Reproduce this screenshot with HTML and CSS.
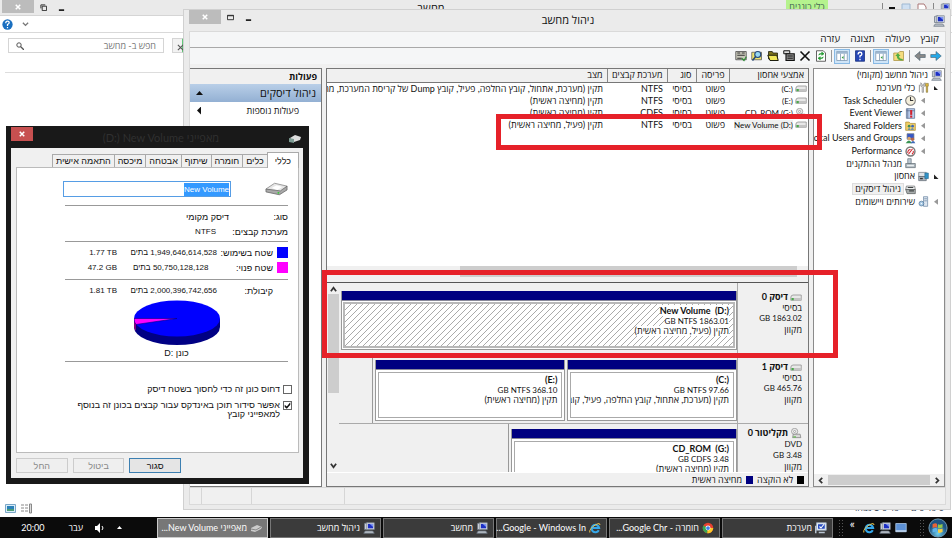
FILE: index.html
```html
<!DOCTYPE html>
<html lang="he" dir="rtl">
<head>
<meta charset="utf-8">
<title>ניהול מחשב</title>
<link rel="stylesheet" href="styles.css">
</head>
<body>
<svg class="defs" aria-hidden="true">
  <symbol id="i-computer" viewBox="0 0 16 16"><path d="M2 2l4-1v9H2z" fill="#c9ced6" stroke="#6b7684"/><path d="M5 1h10v9H5z" fill="#e3e7ec" stroke="#77808c"/><path d="M6.500 2.500h7v6h-7z" fill="#1c2fc4"/><path d="M9 2.500h4.500v4z" fill="#7b93f2"/><path d="M3 12h10l2 3H1z" fill="#bcc3cb" stroke="#6b7684"/></symbol>
  <symbol id="i-drive" viewBox="0 0 16 10"><path d="M4 1h11v7H1V5q0-4 3-4z" fill="#e8e8e8" stroke="#8b8b8b"/><path d="M1 5h14v3H1z" fill="#c4c4c4"/><path d="M2 5h3v3H2z" fill="#49a84a"/></symbol>
  <symbol id="i-cd" viewBox="0 0 16 16"><circle cx="6" cy="5" r="4.500" fill="#eee" stroke="#888"/><circle cx="6" cy="5" r="1.500" fill="#fff" stroke="#888"/><path d="M4 9h10l1 5H3z" fill="#d8d8d8" stroke="#777"/><path d="M4 12h4v2H4z" fill="#6cbb5c"/></symbol>
  <symbol id="i-tools" viewBox="0 0 16 16"><path d="M4 1v5l2 1v8h2V7l2-1V1L8 3v2H6V3z" fill="#d8d8d8" stroke="#777" stroke-width=".8"/><path d="M11 2h4v4h-1v9h-2V6h-1z" fill="#e0b93c" stroke="#77682d" stroke-width=".8"/><path d="M2 4v11" stroke="#999" stroke-width="1.500"/></symbol>
  <symbol id="i-clock" viewBox="0 0 16 16"><circle cx="8" cy="8" r="7" fill="#f5efdc" stroke="#777" stroke-width="1.500"/><path d="M8 3v5h4" fill="none" stroke="#333" stroke-width="1.500"/></symbol>
  <symbol id="i-event" viewBox="0 0 16 16"><path d="M2 1h12v14H2z" fill="#b9cdec" stroke="#526487"/><path d="M4 1v14M2 4h12" stroke="#526487"/><path d="M9 3v7" stroke="#d4212c" stroke-width="3"/><path d="M9 11v3" stroke="#d4212c" stroke-width="3"/></symbol>
  <symbol id="i-shared" viewBox="0 0 16 16"><path d="M1 3h5l2 2h7v10H1z" fill="#f0cf68" stroke="#ac8a2d"/><circle cx="6" cy="9" r="2" fill="#3f8a58"/><circle cx="11" cy="9" r="2" fill="#3c67b7"/><path d="M4 14q2-4 4 0 3-4 5 0z" fill="#487fc0"/></symbol>
  <symbol id="i-users" viewBox="0 0 16 16"><path d="M3 1h10v8H3z" fill="#3657c8" stroke="#717b88"/><circle cx="6" cy="8" r="2.500" fill="#d9a66c"/><circle cx="11" cy="9" r="2.500" fill="#b4654a"/><path d="M1 15q5-8 9 0z" fill="#379353"/><path d="M8 15q4-7 7 0z" fill="#3e68b6"/></symbol>
  <symbol id="i-perf" viewBox="0 0 16 16"><circle cx="8" cy="8" r="6.500" fill="#fff" stroke="#777" stroke-width="2"/><path d="M4 10q0-5 4-5M5 12l6-8M10 12q3-2 2-5" stroke="#d1232a" fill="none" stroke-width="1.500"/></symbol>
  <symbol id="i-device" viewBox="0 0 16 16"><path d="M4 1h5v7H4z" fill="#bcc9d3" stroke="#65717a"/><path d="M1 8h14v6H1z" fill="#aeb9bf" stroke="#5f6b72"/><path d="M3 11h10" stroke="#e9eef0" stroke-width="2"/></symbol>
  <symbol id="i-storage" viewBox="0 0 16 16"><path d="M1 2h11v6H1z" fill="#dfe3e7" stroke="#6c7680"/><path d="M1 8h11v6H1z" fill="#adb5bd" stroke="#59636d"/><path d="M10 3h5v8h-5z" fill="#3093c9" stroke="#296f96"/><path d="M3 11h4" stroke="#333" stroke-width="2"/></symbol>
  <symbol id="i-diskmgmt" viewBox="0 0 16 16"><path d="M2 3h12l1 5H1z" fill="#eceeee" stroke="#676b6b"/><path d="M1 8h14v6H3z" fill="#a8adad" stroke="#535858"/><path d="M6 10h7M4 5h8" stroke="#404545" stroke-width="1.500"/></symbol>
  <symbol id="i-services" viewBox="0 0 16 16"><path d="M8 1h6v14H8z" fill="#dce5ef" stroke="#6883a0"/><path d="M9 4h4M9 7h4" stroke="#6883a0"/><circle cx="5" cy="11" r="3.500" fill="#a8c9e4" stroke="#4a7399"/><circle cx="5" cy="11" r="1" fill="#fff"/></symbol>
  <symbol id="i-pane" viewBox="0 0 16 16"><path d="M1 2h14v12H1z" fill="#fff" stroke="#7893ad"/><path d="M1 2h14v3H1z" fill="#9db6cf"/><path d="M6 5v9M11 5v9" stroke="#7893ad"/><path d="M10 8v4L7.500 10z" fill="#339a3b"/></symbol>
  <symbol id="i-folderup" viewBox="0 0 16 16"><path d="M1 4h6l2-2h5v12H1z" fill="#f4dc7d" stroke="#ac9340"/><path d="M13 12q-5 0-5-4h2L6.500 4 3 8h2q0 6 8 6z" fill="#53ad46"/></symbol>
  <symbol id="i-help" viewBox="0 0 16 16"><path d="M2 1h12v14H2z" fill="#2646b5" stroke="#132a7a"/><path d="M5.500 6q0-3 2.500-3t2.500 2.200Q10.500 7 8 8v2M8 11.500v2" fill="none" stroke="#fff" stroke-width="1.800"/></symbol>
  <symbol id="i-refresh" viewBox="0 0 16 16"><path d="M2 1h9l3 3v11H2z" fill="#fff" stroke="#333"/><path d="M5 7q0-3 4-2M9 3v4l3-2zM11 9q0 3-4 2M7 9v4l-3-2z" fill="#239a32" stroke="#239a32"/></symbol>
  <symbol id="i-x" viewBox="0 0 16 16"><path d="M2 2l12 12M14 2L2 14" stroke="#111" stroke-width="2.200"/></symbol>
  <symbol id="i-props" viewBox="0 0 16 16"><path d="M1 1h8v4H1z" fill="#ddd" stroke="#111" stroke-width="1.300"/><path d="M4 5h11v9H4z" fill="#888" stroke="#111" stroke-width="1.500"/><path d="M6 8h7M6 11h7" stroke="#222" stroke-width="1.500"/></symbol>
  <symbol id="i-open" viewBox="0 0 16 16"><path d="M2 2h5l1 2h6v8H2z" fill="#7d731c" stroke="#181808"/><path d="M1 7h12l2 7H4z" fill="#f1e759" stroke="#181808" stroke-width="1.300"/></symbol>
  <symbol id="i-search" viewBox="0 0 16 16"><path d="M1 3h13v10H1z" fill="#efe36c" stroke="#555"/><circle cx="9" cy="6" r="4" fill="#96d7f4" stroke="#244878" stroke-width="1.500"/><path d="M6 9l-4 5" stroke="#244878" stroke-width="2"/></symbol>
  <symbol id="i-settings" viewBox="0 0 16 16"><path d="M1 2h14v11H1z" fill="#c9c9bb" stroke="#444"/><path d="M3 4h4M9 4h4M3 7h10M3 11h6" stroke="#333" stroke-width="1.500"/><path d="M9 11l3 3 3-5" stroke="#2d8d34" stroke-width="1.500" fill="none"/></symbol>
  <symbol id="i-arrow" viewBox="0 0 16 16"><path d="M1 6h7V2l7 6-7 6v-4H1z" fill="currentColor" stroke="#48606f" stroke-width=".8"/></symbol>
  <symbol id="i-ie" viewBox="0 0 16 16"><path d="M13 11a5 5 0 1 1 .5-3H4" fill="none" stroke="#36a8ea" stroke-width="2.800"/><path d="M1 14Q0 9 9 3.500q6-3 5.500.5" fill="none" stroke="#f2c84b" stroke-width="1.300"/></symbol>
  <symbol id="i-chrome" viewBox="0 0 16 16"><circle cx="8" cy="8" r="7" fill="#e8412f"/><path d="M8 8L1.900 4.500A7 7 0 0 0 7 15z" fill="#36a852"/><path d="M8 8h7a7 7 0 0 1-8 7z" fill="#fbc926"/><circle cx="8" cy="8" r="3.300" fill="#fff"/><circle cx="8" cy="8" r="2.500" fill="#3e7ee8"/></symbol>
  <symbol id="i-system" viewBox="0 0 16 16"><path d="M2 1h13v10H2z" fill="#e5edf5" stroke="#9dadc0"/><path d="M4 3h9v6H4z" fill="#2349be"/><path d="M6 6l2 2 4-5" stroke="#fff" stroke-width="1.500" fill="none"/><path d="M5 13h8v2H5z" fill="#bac5d1"/><path d="M1 5v10" stroke="#bac5d1" stroke-width="2"/></symbol>
  <symbol id="i-desktop" viewBox="0 0 16 16"><path d="M1 2h14v11H1z" fill="#5d91d6" stroke="#b4cdea"/><path d="M1 11h14v2H1z" fill="#c6d8ec"/></symbol>
</svg>

<div class="desktop">
  <section class="explorer">
    <header class="exp-title" dir="ltr">
      <button class="win-close" aria-label="סגור"><svg viewBox="0 0 8 8"><path d="M1 1l6 6M7 1L1 7"/></svg></button>
      <button class="win-btn" aria-label="שחזר"><svg viewBox="0 0 8 8"><path d="M1 5V1h5M2.500 2.500h5v5h-5z"/></svg></button>
      <button class="win-btn" aria-label="מזער"><svg viewBox="0 0 8 8"><path d="M1 7h6" stroke-width="2"/></svg></button>
      <span class="exp-name">מחשב</span>
      <span class="exp-tab">כלי כוננים</span>
      <span class="exp-quick"><i></i><b></b><svg viewBox="0 0 10 8"><path d="M1 0h8v8H1z" fill="#cfe0f2" stroke="#9fb8d2"/></svg><svg viewBox="0 0 10 8"><path d="M1 0h6l2 3v5H1z" fill="#fff" stroke="#a77"/><path d="M6 6l3 2" stroke="#d33"/></svg><i></i><svg viewBox="0 0 16 16"><use href="#i-computer"/></svg></span>
    </header>
    <div class="exp-ribbon" dir="ltr">
      <svg class="i11" viewBox="0 0 16 16"><circle cx="8" cy="8" r="7.500" fill="#1a6fc0"/><path d="M5.500 6q0-3 2.500-3t2.500 2.200Q10.500 7 8 8v2M8 11.500v2" fill="none" stroke="#fff" stroke-width="1.800"/></svg>
      <svg class="i7" viewBox="0 0 8 8"><path d="M1 2l3 3 3-3" fill="none" stroke="#777" stroke-width="1.500"/></svg>
    </div>
    <div class="exp-address" dir="ltr">
      <label class="exp-search"><svg class="i8" viewBox="0 0 8 8"><circle cx="3" cy="3" r="2.200" fill="none" stroke="#555"/><path d="M4.500 4.500L8 8" stroke="#555" stroke-width="1.300"/></svg><input dir="rtl" type="text" placeholder="חפש ב- מחשב" aria-label="חפש ב- מחשב"></label>
      <span class="exp-stop"><svg class="i7" viewBox="0 0 8 8"><path d="M1 1l6 6M7 1L1 7" stroke="#555" stroke-width="1.300"/></svg></span>
    </div>
    <footer class="exp-foot" dir="ltr">
      <svg viewBox="0 0 11 11"><path d="M.5 1.500h10v8H.5z" fill="#d9ecf8" stroke="#7ba7c7"/><path d="M2 3h7v3H2z" fill="#2a80b8"/><path d="M2 6h7v2H2z" fill="#4c9b75"/></svg>
      <svg viewBox="0 0 11 11"><path d="M0 2h3M4 2h3M0 5h3M4 5h3M0 8h3M4 8h3" stroke="#888"/><path d="M8.500 1h2v9h-2z" fill="#ddd" stroke="#888"/></svg>
      <span class="exp-count" dir="rtl"><span>6 פריטים</span><span>פריט 1 נבחר</span></span>
    </footer>
  </section>

  <section class="mgmt">
    <header class="mgmt-title" dir="ltr">
      <button class="win-close" aria-label="סגור"><svg viewBox="0 0 8 8"><path d="M1 1l6 6M7 1L1 7"/></svg></button>
      <button class="win-btn" aria-label="הגדל"><svg viewBox="0 0 8 8"><path d="M.5 1.500h7v5h-7zM.5 2h7"/></svg></button>
      <button class="win-btn" aria-label="מזער"><svg viewBox="0 0 8 8"><path d="M1 7h6" stroke-width="2"/></svg></button>
      <h1>ניהול מחשב</h1>
      <svg class="i12" viewBox="0 0 16 16"><use href="#i-computer"/></svg>
    </header>
    <div class="mgmt-body">
      <nav class="menu"><a href="#">קובץ</a><a href="#">פעולה</a><a href="#">תצוגה</a><a href="#">עזרה</a></nav>
      <div class="toolbar">
        <button class="tool fwd" aria-label="קדימה"><svg><use href="#i-arrow"/></svg></button>
        <button class="tool back" aria-label="אחורה"><svg><use href="#i-arrow"/></svg></button>
        <i class="sep"></i>
        <button class="tool" aria-label="רמה למעלה"><svg><use href="#i-folderup"/></svg></button>
        <button class="tool on" aria-label="עץ"><svg><use href="#i-pane"/></svg></button>
        <i class="sep"></i>
        <button class="tool" aria-label="עזרה"><svg><use href="#i-help"/></svg></button>
        <button class="tool on" aria-label="פעולות"><svg><use href="#i-pane"/></svg></button>
        <i class="sep"></i>
        <button class="tool" aria-label="רענן"><svg><use href="#i-refresh"/></svg></button>
        <button class="tool" aria-label="מחק"><svg><use href="#i-x"/></svg></button>
        <button class="tool" aria-label="מאפיינים"><svg><use href="#i-props"/></svg></button>
        <button class="tool" aria-label="פתח"><svg><use href="#i-open"/></svg></button>
        <button class="tool" aria-label="חפש"><svg><use href="#i-search"/></svg></button>
        <button class="tool" aria-label="הגדרות"><svg><use href="#i-settings"/></svg></button>
      </div>
      <div class="panes">
        <aside class="tree">
          <ul>
            <li><svg><use href="#i-computer"/></svg><span>ניהול מחשב (מקומי)</span></li>
            <li class="l1"><i class="open"></i><svg><use href="#i-tools"/></svg><span>כלי מערכת</span></li>
            <li class="l2"><i class="shut"></i><svg><use href="#i-clock"/></svg><span class="en">Task Scheduler</span></li>
            <li class="l2"><i class="shut"></i><svg><use href="#i-event"/></svg><span class="en">Event Viewer</span></li>
            <li class="l2"><i class="shut"></i><svg><use href="#i-shared"/></svg><span class="en">Shared Folders</span></li>
            <li class="l2"><i class="shut"></i><svg><use href="#i-users"/></svg><span class="en">Local Users and Groups</span></li>
            <li class="l2"><i class="shut"></i><svg><use href="#i-perf"/></svg><span class="en">Performance</span></li>
            <li class="l2"><i></i><svg><use href="#i-device"/></svg><span>מנהל ההתקנים</span></li>
            <li class="l1"><i class="open"></i><svg><use href="#i-storage"/></svg><span>אחסון</span></li>
            <li class="l2"><i></i><svg><use href="#i-diskmgmt"/></svg><span class="picked">ניהול דיסקים</span></li>
            <li class="l1"><i class="shut"></i><svg><use href="#i-services"/></svg><span>שירותים ויישומים</span></li>
          </ul>
          <div class="hscroll"><svg viewBox="0 0 8 8"><path d="M2 1l3 3-3 3"/></svg><b></b><svg viewBox="0 0 8 8"><path d="M6 1L3 4l3 3"/></svg></div>
        </aside>

        <main class="center">
          <div class="vol-list">
            <table>
              <colgroup><col class="c-vol"><col class="c-lay"><col class="c-type"><col class="c-fs"><col></colgroup>
              <thead><tr><th>אמצעי אחסון</th><th>פריסה</th><th>סוג</th><th>מערכת קבצים</th><th>מצב</th></tr></thead>
              <tbody>
                <tr><td><svg class="drv"><use href="#i-drive"/></svg><bdi dir="ltr">(C:)</bdi></td><td>פשוט</td><td>בסיסי</td><td>NTFS</td><td>תקין (מערכת, אתחול, קובץ החלפה, פעיל, קובץ Dump של קריסת המערכת, מחיצה ראשית)</td></tr>
                <tr><td><svg class="drv"><use href="#i-drive"/></svg><bdi dir="ltr">(E:)</bdi></td><td>פשוט</td><td>בסיסי</td><td>NTFS</td><td>תקין (מחיצה ראשית)</td></tr>
                <tr><td><svg class="drv cd"><use href="#i-cd"/></svg><bdi dir="ltr">CD_ROM (G:)</bdi></td><td>פשוט</td><td>בסיסי</td><td>CDFS</td><td>תקין (מחיצה ראשית)</td></tr>
                <tr><td><svg class="drv"><use href="#i-drive"/></svg><bdi class="picked" dir="ltr">New Volume (D:)</bdi></td><td>פשוט</td><td>בסיסי</td><td>NTFS</td><td>תקין (פעיל, מחיצה ראשית)</td></tr>
              </tbody>
            </table>
            <div class="hbar"><b></b></div>
          </div>
          <div class="disks">
            <div class="disk-rows">
              <article class="disk d0">
                <div class="disk-info"><h2><svg class="drv"><use href="#i-drive"/></svg>דיסק 0</h2><p>בסיסי</p><p class="size">1863.02 GB</p><p>מקוון</p></div>
                <div class="parts"><div class="part hatch"><div><h3><bdi dir="ltr">New Volume&nbsp; (D:)</bdi></h3><p class="size">1863.01 GB NTFS</p><p>תקין (פעיל, מחיצה ראשית)</p></div></div></div>
              </article>
              <article class="disk d1">
                <div class="disk-info"><h2><svg class="drv"><use href="#i-drive"/></svg>דיסק 1</h2><p>בסיסי</p><p class="size">465.76 GB</p><p>מקוון</p></div>
                <div class="parts"><div class="part p-c"><div><h3><bdi dir="ltr">(C:)</bdi></h3><p class="size">97.66 GB NTFS</p><p>תקין (מערכת, אתחול, קובץ החלפה, פעיל, קובץ Dump)</p></div></div><div class="part p-e"><div><h3><bdi dir="ltr">(E:)</bdi></h3><p class="size">368.10 GB NTFS</p><p>תקין (מחיצה ראשית)</p></div></div></div>
              </article>
              <article class="disk d2">
                <div class="disk-info"><h2><svg class="drv cd"><use href="#i-cd"/></svg>תקליטור 0</h2><p class="size">DVD</p><p class="size">3.48 GB</p><p>מקוון</p></div>
                <div class="parts"><div class="part"><div><h3><bdi dir="ltr">CD_ROM&nbsp; (G:)</bdi></h3><p class="size">3.48 GB CDFS</p><p>תקין (מחיצה ראשית)</p></div></div></div>
              </article>
            </div>
            <div class="vscroll"><svg viewBox="0 0 8 8"><path d="M1 6l3-4 3 4"/></svg><b></b><svg viewBox="0 0 8 8"><path d="M1 2l3 4 3-4"/></svg></div>
          </div>
          <div class="legend"><i class="black"></i>לא הוקצה<i class="navy"></i>מחיצה ראשית</div>
        </main>

        <aside class="actions">
          <h2>פעולות</h2>
          <div class="act-head">ניהול דיסקים<i class="up"></i></div>
          <div class="act-row">פעולות נוספות<i class="side"></i></div>
        </aside>
      </div>
      <footer class="status" dir="ltr"><i></i><i></i><i></i></footer>
    </div>
  </section>

  <section class="dialog">
    <header class="dlg-title" dir="ltr">
      <button class="dlg-close" aria-label="סגור"><svg viewBox="0 0 8 8"><path d="M1 1l6 6M7 1L1 7"/></svg></button>
      <h2 dir="rtl">מאפייני New Volume <bdi dir="ltr">(D:)</bdi></h2>
      <svg class="dlg-icon" viewBox="0 0 12 8"><path d="M1 3l5-3 6 2-1 3-6 2z" fill="#ddd"/><path d="M0 3l5 1v4L0 7z" fill="#7d9b93"/></svg>
    </header>
    <div class="dlg-body">
      <div class="tabs"><button class="tab active">כללי</button><button class="tab">כלים</button><button class="tab">חומרה</button><button class="tab">שיתוף</button><button class="tab">אבטחה</button><button class="tab">מיכסה</button><button class="tab">התאמה אישית</button></div>
      <div class="panel">
        <div class="name-row">
          <svg class="bigdrive" viewBox="0 0 24 14"><path d="M1 7L10 1l13 3-7 8z" fill="#e6e6e6" stroke="#999"/><path d="M1 7l15 2 7-5v4l-8 5-14-3z" fill="#a9a9a9" stroke="#666" stroke-width=".8"/><path d="M7 6l5-3 6 2-5 3z" fill="#fff"/><circle cx="14" cy="11" r="1" fill="#3c3"/></svg>
          <label class="name-box"><span class="sel">New Volume</span><input type="text" dir="rtl" aria-label="תווית אמצעי אחסון"></label>
        </div>
        <dl class="kind"><dt>סוג:</dt><dd>דיסק מקומי</dd><dt>מערכת קבצים:</dt><dd class="fs">NTFS</dd></dl>
        <dl class="space">
          <i class="blue"></i><dt>שטח בשימוש:</dt><dd>1,949,646,614,528 בתים</dd><dd dir="ltr">1.77 TB</dd>
          <i class="pink"></i><dt>שטח פנוי:</dt><dd>50,750,128,128 בתים</dd><dd dir="ltr">47.2 GB</dd>
        </dl>
        <dl class="space cap"><i></i><dt>קיבולת:</dt><dd>2,000,396,742,656 בתים</dd><dd dir="ltr">1.81 TB</dd></dl>
        <figure class="pie">
          <svg viewBox="0 0 86 45"><path d="M0 19v8a43 18 0 0 0 86 0v-8z" fill="#000084"/><path d="M0 19v8q0 2 2 4v-8z" fill="#84007f"/><ellipse cx="43" cy="18.500" rx="43" ry="18" fill="#00f"/><path d="M43 18.500H0q0 4 2 6z" fill="#f0f" stroke="#000084" stroke-width=".6"/></svg>
          <figcaption>כונן <bdi dir="ltr">D:</bdi></figcaption>
        </figure>
        <div class="checks">
          <label><input type="checkbox"><span>דחוס כונן זה כדי לחסוך בשטח דיסק</span></label>
          <label><input type="checkbox" checked><span>אפשר סידור תוכן באינדקס עבור קבצים בכונן זה בנוסף<br>למאפייני קובץ</span></label>
        </div>
      </div>
      <div class="dlg-btns"><button class="main">סגור</button><button disabled>ביטול</button><button disabled>החל</button></div>
    </div>
  </section>

  <div class="mark mark-row"></div>
  <div class="mark mark-disk"></div>
</div>

<footer class="taskbar">
  <button class="start" aria-label="התחל"><svg viewBox="0 0 22 22"><defs><radialGradient id="orb" cy=".8"><stop offset="0" stop-color="#6fd0ee"/><stop offset="1" stop-color="#1d5282"/></radialGradient></defs><circle cx="11" cy="11" r="10" fill="url(#orb)" stroke="#79a5bd"/><path d="M5 7q3-2 5-.5v4q-2-1-5 .5z" fill="#ea6336"/><path d="M11 7q2 1 5-.5v4q-3 1.500-5 .5z" fill="#91c64c"/><path d="M5 12q3-1.500 5-.5v4q-2-1-5 .5z" fill="#5db2ea"/><path d="M11 12q2 1 5-.5v4q-3 1.500-5 .5z" fill="#f6cd41"/></svg></button>
  <i class="grip"></i>
  <div class="quick"><svg><use href="#i-desktop"/></svg><svg><use href="#i-computer"/></svg><svg><use href="#i-ie"/></svg><span>»</span></div>
  <i class="grip"></i>
  <div class="tasks">
    <button class="task"><svg><use href="#i-system"/></svg><span>מערכת</span></button>
    <button class="task"><svg><use href="#i-chrome"/></svg><span>חומרה - Google Chr...</span></button>
    <button class="task"><svg><use href="#i-ie"/></svg><span>Google - Windows In...</span></button>
    <button class="task"><svg><use href="#i-computer"/></svg><span>מחשב</span></button>
    <button class="task"><svg><use href="#i-computer"/></svg><span>ניהול מחשב</span></button>
    <button class="task cur"><svg viewBox="0 0 12 8"><path d="M1 4l6-3 5 2-1 2-6 3-4-1z" fill="#ccc"/><path d="M1 5l5 1 5-3" stroke="#888" fill="none"/></svg><span>מאפייני New Volume...</span></button>
  </div>
  <div class="tray"><i class="tri"></i><svg viewBox="0 0 10 10"><path d="M0 3h2l3-3v10L2 7H0z" fill="#fff"/><path d="M7 3q2 2 0 4" stroke="#fff" fill="none"/></svg><span class="lang">עבר</span><time>20:00</time></div>
</footer>
</body>
</html>
```
FILE: styles.css
```css
* { box-sizing: border-box; margin: 0; padding: 0; }
html, body { height: 100%; }
body { display: flex; flex-direction: column; overflow: hidden; background: #fff; color: #111; font: 9px/12px Lato, "Open Sans", "Liberation Sans", sans-serif; }
button, input { font: inherit; color: inherit; border: 0; background: none; }
ul { list-style: none; }
i { font-style: normal; }
svg { flex: none; }
.defs { position: absolute; width: 0; height: 0; }
.i7 { width: 7px; height: 7px; }
.i8 { width: 8px; height: 8px; }
.i11 { width: 11px; height: 11px; }
.i12 { width: 12px; height: 12px; }

.desktop { position: relative; flex: 1; min-height: 0; overflow: hidden; }

/* window buttons */
.win-close { width: 32px; height: 14px; background: #bcbcbc; display: flex; align-items: center; justify-content: center; }
.win-close svg, .dlg-close svg { width: 6px; height: 6px; stroke: #fff; stroke-width: 2; }
.win-btn { width: 18px; height: 14px; display: flex; align-items: center; justify-content: center; }
.win-btn svg { width: 7px; height: 7px; fill: none; stroke: #222; stroke-width: 1; }

/* explorer behind */
.explorer { position: absolute; inset: 0; display: flex; flex-direction: column; }
.exp-title { display: flex; height: 16px; padding-left: 2px; background: #eaeaea; border-bottom: 1px solid #d5d5d5; }
.exp-title .win-close { height: 13px; }
.exp-name { flex: 1; padding-left: 6px; text-align: center; font-size: 11px; line-height: 15px; }
.exp-tab { width: 42px; margin-right: 54px; background: #b5f28e; text-align: center; line-height: 14px; color: #465; white-space: nowrap; }
.exp-quick { display: flex; gap: 6px; align-items: flex-start; padding: 3px 2px 0 0; }
.exp-quick i { width: 1px; height: 7px; background: #888; }
.exp-quick b { width: 6px; height: 2px; margin-top: 4px; background: #111; }
.exp-quick svg { width: 10px; height: 10px; }
.exp-ribbon { display: flex; align-items: center; gap: 9px; height: 17px; padding-left: 2px; border-bottom: 1px solid #d9d9d9; }
.exp-address { display: flex; gap: 8px; height: 40px; margin-left: 5px; padding: 5px 3px; border-bottom: 1px solid #ddd; }
.exp-search { display: flex; align-items: center; width: 156px; height: 15px; padding: 0 7px; border: 1px solid #d5d5d5; }
.exp-search input { flex: 1; min-width: 0; height: 13px; }
.exp-search input::placeholder { color: #777; opacity: 1; }
.exp-stop { width: 12px; height: 15px; padding: 3px 4px; border: 1px solid #d5d5d5; border-right: 2px solid #62c77a; background: #f2f2f2; }
.exp-foot { display: flex; align-items: center; gap: 5px; height: 18px; margin-top: auto; padding: 0 8px 0 5px; }
.exp-foot svg { width: 11px; height: 11px; }
.exp-count { display: flex; gap: 12px; margin-left: auto; color: #345; }

/* computer management */
.mgmt { position: absolute; inset: 9px 1px 7px 183px; display: flex; flex-direction: column; padding: 0 4px 4px 5px; background: #ebebeb; border: 1px solid #d0d0d0; }
.mgmt-title { display: flex; height: 21px; align-items: flex-start; }
.mgmt-title h1 { flex: 1; padding-right: 54px; text-align: center; font-size: 11px; font-weight: 400; line-height: 20px; }
.mgmt-title .i12 { margin: 5px 1px 0 0; }
.mgmt-body { display: flex; flex: 1; flex-direction: column; min-height: 0; background: #f0f0f0; border: 1px solid #dadada; }
.menu { display: flex; gap: 10px; height: 16px; padding: 0 6px; background: #f5f6f7; border-bottom: 1px solid #a9a9a9; font-size: 10px; line-height: 13px; }
.menu a { color: #222; text-decoration: none; }
.toolbar { display: flex; align-items: center; height: 16px; padding: 0 1px; background: #f5f6f7; }
.tool { display: flex; align-items: center; justify-content: center; width: 16px; height: 15px; }
.tool svg { width: 12px; height: 12px; }
.tool.on { margin-right: 2px; background: #cfe5f8; border: 1px solid #88b9e4; }
.fwd { color: #25a7e6; }
.back { color: #888; }
.back svg { transform: scaleX(-1); }
.sep { width: 1px; height: 12px; margin: 0 2px; background: #999; }
.panes { display: flex; flex: 1; gap: 4px; min-height: 0; margin-top: 4px; }

.tree { display: flex; flex: none; flex-direction: column; width: 132px; background: #fff; border: 1px solid #8b8b8b; overflow: hidden; }
.tree ul { display: grid; grid-auto-rows: 1fr; height: 139px; }
.tree li { display: flex; align-items: center; gap: 3px; padding-right: 2px; white-space: nowrap; }
.tree li svg { width: 11px; height: 11px; }
.tree .l1 { padding-right: 4px; }
.tree .l2 { padding-right: 17px; }
.tree .en { direction: ltr; }
.tree li > i { width: 8px; display: flex; justify-content: center; }
.open::before { content: ""; width: 5px; height: 5px; background: #222; clip-path: polygon(0 0, 100% 100%, 0 100%); }
.shut::before { content: ""; width: 4px; height: 6px; background: #999; clip-path: polygon(100% 0, 100% 100%, 0 50%); }
.picked { background: #f0f0f0; }
.tree .picked { padding: 0 2px; margin-right: -2px; border: 1px solid #ddd; line-height: 10px; }
.hscroll { display: flex; align-items: center; gap: 4px; height: 12px; margin-top: auto; padding: 0 3px; background: #f0f0f0; }
.hscroll b { flex: 1; height: 10px; background: #cdcdcd; }
.hscroll svg, .vscroll svg { width: 7px; height: 7px; fill: none; stroke: #333; stroke-width: 2; }

.center { display: flex; flex: 1; flex-direction: column; min-width: 0; border: 1px solid #777; background: #f0f0f0; }
.vol-list { display: flex; flex-direction: column; flex: 214; min-height: 0; background: #fff; border-bottom: 1px solid #555; }
.vol-list table { width: 100%; table-layout: fixed; border-collapse: collapse; }
.c-vol { width: 79px; } .c-lay { width: 33px; } .c-type { width: 29px; } .c-fs { width: 60px; }
th, td { height: 12px; padding: 0 4px; overflow: hidden; white-space: nowrap; text-align: right; font-weight: 400; line-height: 12px; }
thead th { height: 13px; background: #f0f0f0; border-left: 1px solid #888; border-bottom: 1px solid #777; }
th:last-child, td:last-child { border-left: 0; }
td:last-child { padding-left: 0; }
td:first-child { padding-right: 1px; padding-left: 0; }
td bdi, .size { font-size: 8px; }
.drv { width: 12px; height: 8px; margin-left: 2px; vertical-align: middle; }
.drv.cd { height: 11px; }
.hbar { height: 16px; margin-top: auto; background: #f0f0f0; }
.hbar b { display: block; width: 70%; height: 11px; margin-right: 11px; background: #cdcdcd; }
.disks { display: flex; flex: 190; min-height: 0; }
.disk-rows { flex: 1; min-width: 0; overflow: hidden; }
.vscroll { display: flex; flex-direction: column; align-items: center; width: 12px; padding: 3px 0; }
.vscroll b { width: 11px; height: 99px; margin: 1px 0 auto; background: #cdcdcd; }
.disk { display: flex; height: 66px; }
.d0 { height: 75px; }
.d0, .d1 { border-bottom: 1px solid #aaa; }
.disk-info { width: 71px; padding: 3px 6px 0 0; border-left: 1px solid #aaa; line-height: 11px; white-space: nowrap; }
.d0 .disk-info { padding-top: 8px; }
.disk h2, .disk h3 { font-size: 9px; font-weight: 700; line-height: 11px; }
.disk p { line-height: 11px; }
.disk .part p { line-height: 10px; }
.parts { display: flex; flex: none; gap: 2px; width: calc(100% - 71px); }
.disk .parts { padding: 2px 0 2px 2px; }
.d0 .parts { padding-top: 8px; padding-bottom: 7px; }
.d2 .parts { padding-top: 5px; }
.d1 .parts { width: calc(93% - 71px); border-left: 1px solid #999; }
.d2 .parts { width: calc(64% - 71px); border-left: 1px solid #999; }
.part { display: flex; flex: 1; flex-direction: column; min-width: 0; border: 1px solid #999; border-top: 0; background: #fff; }
.part::before { content: ""; flex: none; height: 9px; background: #000080; border-bottom: 1px solid #889; }
.part > div { flex: 1; margin: 2px; padding: 1px 4px 0; border: 1px solid #aaa; overflow: hidden; white-space: nowrap; }
.p-c { flex: 168; } .p-e { flex: 189; }
.hatch > div { margin: 1px; border: 2px solid #b8b8b8; background: linear-gradient(135deg, #fff 45%, #aaa 45% 55%, #fff 55%) 0 0 / 6px 6px; }
.hatch h3 bdi, .hatch p { background: #fff; }
.hatch p { width: fit-content; }
.legend { display: flex; align-items: center; gap: 4px; height: 14px; padding: 0 4px; border-top: 1px solid #fff; }
.legend i { width: 7px; height: 8px; }
.black { background: #000; }
.navy { background: #000080; }

.actions { flex: none; width: 132px; background: #fff; border: 1px solid #777; border-left: 0; }
.actions h2 { height: 15px; padding-right: 4px; background: #f0f0f0; font-size: 9px; line-height: 15px; }
.act-head { display: flex; align-items: center; justify-content: space-between; height: 18px; padding: 0 5px 0 6px; background: linear-gradient(#b9cfe8, #93b0d3); font-size: 11px; }
.act-row { display: flex; align-items: center; justify-content: space-between; height: 17px; padding: 0 22px 0 7px; }
.up { width: 7px; height: 4px; background: #111; clip-path: polygon(50% 0, 100% 100%, 0 100%); }
.side { width: 4px; height: 8px; background: #111; clip-path: polygon(100% 0, 100% 100%, 0 50%); }
.status { display: flex; height: 17px; border-top: 1px solid #d6d6d6; }
.status i { border-right: 1px solid #d6d6d6; width: 12px; }
.status i:nth-child(2) { width: 50px; }
.status i:nth-child(3) { width: 93px; }

/* properties dialog */
.dialog { position: absolute; left: 6px; top: 126px; width: 303px; padding: 0 6px 6px 5px; background: #191919; font: 9px/12px "Liberation Sans", sans-serif; }
.dlg-title { display: flex; height: 22px; }
.dlg-close { width: 22px; height: 14px; margin-top: 1px; background: #c75050; display: flex; align-items: center; justify-content: center; }
.dlg-title h2 { flex: 1; text-align: center; color: #303030; font: 400 11px/23px Lato, "Open Sans", sans-serif; }
.dlg-icon { width: 12px; height: 8px; margin: 9px 2px 0 0; }
.dlg-body { padding: 4px 4px 5px 5px; background: #f0f0f0; }
.tabs { display: flex; align-items: flex-end; padding-left: 36px; }
.tab { height: 13px; flex: auto; border: 1px solid #aaa; border-bottom: 0; border-right: 0; white-space: nowrap; background: #f0f0f0; }
.tab.active { height: 16px; padding: 0 4px; margin-bottom: -1px; background: #fff; border-right: 1px solid #aaa; }
.panel { padding: 13px 10px 0; height: 286px; background: #fff; border: 1px solid #bbb; }
.name-row { display: flex; align-items: center; justify-content: space-between; padding-left: 36px; height: 16px; }
.bigdrive { width: 23px; height: 14px; }
.name-box { display: flex; align-items: center; width: 168px; height: 16px; padding-right: 1px; border: 1px solid #569de5; }
.name-box .sel { background: #3399ff; color: #fff; font-size: 8px; line-height: 13px; }
.name-box input { flex: 1; min-width: 0; height: 13px; }
.panel dl, .pie { margin-left: 38px; }
.kind { display: grid; grid-template-columns: 59px 1fr; grid-auto-rows: 15px; align-items: center; margin-top: 8px; padding-top: 3px; height: 36px; border-top: 1px solid #999; white-space: nowrap; }
.kind .fs { padding-right: 13px; font-size: 8px; }
.space { display: grid; grid-template-columns: 11px 52px 84px 1fr; grid-auto-rows: 15px; column-gap: 4px; align-items: center; height: 38px; padding-top: 3px; border-top: 1px solid #999; white-space: nowrap; }
.space i { width: 11px; height: 11px; }
.space dd { text-align: left; font-size: 8px; }
.space dd[dir] { padding-right: 12px; text-align: right; }
.blue { background: #00f; } .pink { background: #f0f; }
.cap { height: 21px; }
.pie { text-align: center; height: 62px; border-bottom: 1px solid #999; }
.pie svg { display: block; width: 86px; height: 45px; margin: 0 auto 2px; }
.checks { display: grid; gap: 7px; padding-top: 23px; margin-right: -4px; }
.checks label { display: flex; gap: 3px; line-height: 9px; white-space: nowrap; }
.checks input { appearance: none; flex: none; width: 9px; height: 9px; border: 1px solid #666; background: #fff; }
.checks input:checked::before { content: ""; display: block; width: 7px; height: 7px; background: #111; clip-path: polygon(10% 40%, 40% 65%, 90% 5%, 90% 40%, 40% 95%, 10% 70%); }
.dlg-btns { display: flex; gap: 5px; margin-top: 5px; padding-right: 118px; }
.dlg-btns button { flex: 1; height: 15px; border: 1px solid #ccc; background: #efefef; color: #888; }
.dlg-btns .main { border-color: #3c7fb1; background: #e5e5e5; color: #111; }

/* red callouts */
.mark { position: absolute; border: 5px solid #e62129; }
.mark-row { top: 114px; right: 130px; width: 326px; height: 36px; }
.mark-disk { top: 270px; right: 114px; left: 322px; height: 88px; }

/* taskbar */
.taskbar { display: flex; align-items: center; height: 21px; flex: none; background: #0b0b0b; color: #fff; }
.start { display: flex; margin: 0 4px; }
.start svg { width: 20px; height: 20px; }
.grip { width: 5px; height: 18px; background: radial-gradient(#555 1px, transparent 1px) 0 0 / 3px 3px; }
.quick { display: flex; gap: 4px; align-items: center; margin: 0 12px 0 0; }
.quick svg, .task svg { width: 12px; height: 12px; }
.quick span { width: 12px; margin-right: 4px; line-height: 8px; padding-bottom: 8px; font-size: 12px; }
.tasks { display: flex; flex: 1; gap: 2px; min-width: 0; margin-right: 5px; }
.task { display: flex; flex: 1; align-items: center; gap: 3px; min-width: 0; height: 20px; padding: 0 5px; border: 1px solid #777; background: #3b3b3b; white-space: nowrap; }
.task.cur { background: #777; border-color: #ccc; }
.tray { display: flex; align-items: center; width: 157px; padding-right: 35px; }
.tray svg { width: 10px; height: 10px; margin-right: 12px; }
.tri { width: 5px; height: 3px; background: #fff; clip-path: polygon(50% 0, 100% 100%, 0 100%); }
.lang { margin-right: 12px; }
.tray time { margin-right: 24px; }
```
